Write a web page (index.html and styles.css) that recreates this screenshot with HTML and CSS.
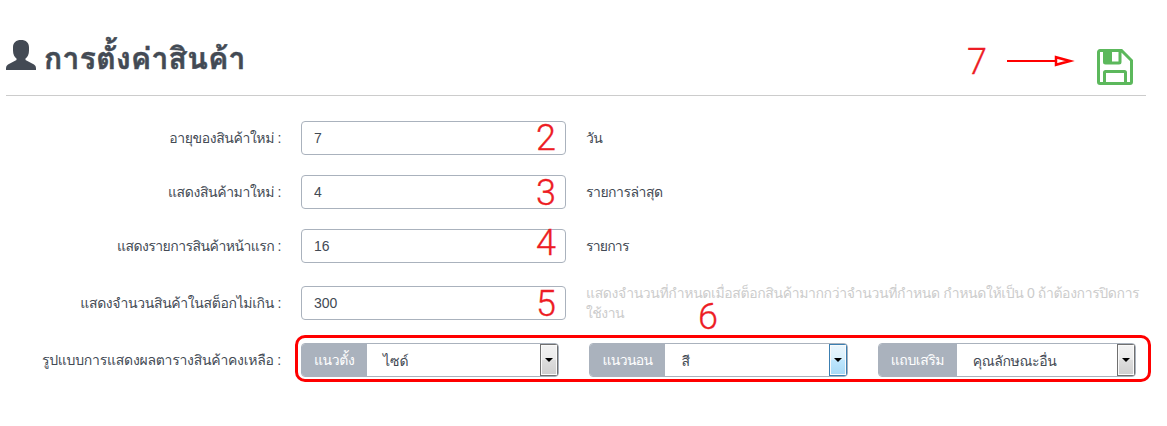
FILE: index.html
```html
<!DOCTYPE html>
<html lang="th">
<head>
<meta charset="utf-8">
<title>การตั้งค่าสินค้า</title>
<link rel="stylesheet" href="styles.css">
</head>
<body>
<main class="page">
  <header class="header">
    <svg class="user-icon" viewBox="0 0 30 30"><path d="M7 7.500C7 2.500 10 0 15 0s8 2.500 8 7.500v3c0 4-1.500 6.500-3.500 8v1.500l8.500 4.500q2 1.200 2 3.500V30H0v-2q0-2.300 2-3.500l8.500-4.500v-1.500C8.500 17 7 14.500 7 10.500z"/></svg>
    <h1 class="title"><span class="t-title">การตั้งค่าสินค้า</span></h1>
    <svg class="save-icon" viewBox="0 0 36 36"><path class="save-line" d="M3 1.500H24.500L34.500 11.500V33a1.500 1.500 0 0 1-1.500 1.500H3A1.500 1.500 0 0 1 1.500 33V3A1.500 1.500 0 0 1 3 1.500zM7.500 34V23.500a1 1 0 0 1 1-1h19a1 1 0 0 1 1 1V34M7.500 2v11a1 1 0 0 0 1 1h13.500a1 1 0 0 0 1-1V2"/><path class="save-fill" d="M7 2h8v12h-8z"/></svg>
  </header>
  <form class="form">
    <div class="row"><label class="label"><span class="t-age">อายุของสินค้าใหม่ :</span></label><input class="input" value="7"><span class="unit"><span class="t-day">วัน</span></span></div>
    <div class="row"><label class="label"><span class="t-new">แสดงสินค้ามาใหม่ :</span></label><input class="input" value="4"><span class="unit"><span class="t-latest">รายการล่าสุด</span></span></div>
    <div class="row row-wide"><label class="label"><span class="t-front">แสดงรายการสินค้าหน้าแรก :</span></label><input class="input" value="16"><span class="unit"><span class="t-item">รายการ</span></span></div>
    <div class="row row-wide"><label class="label"><span class="t-stock">แสดงจำนวนสินค้าในสต็อกไม่เกิน :</span></label><input class="input" value="300"><span class="hint"><span class="t-hint">แสดงจำนวนที่กำหนดเมื่อสต็อกสินค้ามากกว่าจำนวนที่กำหนด กำหนดให้เป็น 0 ถ้าต้องการปิดการ</span><br><span class="t-use">ใช้งาน</span></span></div>
    <div class="row"><label class="label"><span class="t-format">รูปแบบการแสดงผลตารางสินค้าคงเหลือ :</span></label>
      <div class="groups">
        <div class="group"><span class="addon addon-vertical"><span class="t-vert">แนวตั้ง</span></span><span class="select"><span class="t-size">ไซด์</span></span><span class="drop"></span></div>
        <div class="group"><span class="addon addon-horizontal"><span class="t-horiz">แนวนอน</span></span><span class="select"><span class="t-color">สี</span></span><span class="drop drop-active"></span></div>
        <div class="group"><span class="addon addon-extra"><span class="t-extra">แถบเสริม</span></span><span class="select"><span class="t-attr">คุณลักษณะอื่น</span></span><span class="drop"></span></div>
      </div>
    </div>
  </form>
  <span class="mark mark-2">2</span>
  <span class="mark mark-3">3</span>
  <span class="mark mark-4">4</span>
  <span class="mark mark-5">5</span>
  <span class="mark mark-6">6</span>
  <span class="mark mark-7">7</span>
  <svg class="arrow" viewBox="0 0 68 12"><path class="arrow-line" d="M0 6H50"/><path class="arrow-head" d="M49 2.200V9.800L63 6z"/></svg>
  <div class="frame"></div>
</main>
</body>
</html>
```
FILE: styles.css
```css
* { box-sizing: border-box; }
body { margin: 0; background: #fff; color: #434a54; font: 14px/20px "Liberation Sans", Tahoma, Loma, "Noto Sans Thai Looped", Waree, Garuda, "Noto Sans Thai", sans-serif; }
.page { position: relative; width: 1167px; height: 426px; overflow: hidden; padding: 0 21px 0 6px; }
.header { display: flex; align-items: flex-start; height: 96px; padding-top: 40px; border-bottom: 1px solid #ccc; }
.user-icon { width: 30px; height: 30px; fill: #434a54; }
.title { margin: 0 auto 0 8px; font-size: 30px; line-height: 38px; font-weight: 700; white-space: nowrap; -webkit-text-stroke: .5px #434a54; }
.save-icon { width: 36px; height: 36px; margin: 9px 13px 0 0; }
.save-line { fill: none; stroke: #5cb85c; stroke-width: 3; }
.save-fill { fill: #5cb85c; }
.form { display: flex; flex-direction: column; gap: 20px; padding-top: 25px; }
.row { display: flex; align-items: center; height: 34px; }
.row-wide { margin-bottom: 3px; }
.label { flex: none; width: 275px; margin-right: 20px; text-align: right; white-space: nowrap; }
.input { flex: none; width: 265px; height: 34px; margin: 0; padding: 6px 12px; border: 1px solid #aab2bd; border-radius: 4px; background: #fff; color: #434a54; font: inherit; }
.unit, .hint { margin-left: 20px; white-space: nowrap; }
.hint { color: #ccc; }
.groups { display: flex; gap: 30px; }
.group { display: flex; width: 258.400px; height: 34px; border: 1px solid #aab2bd; border-radius: 4px; overflow: hidden; }
.addon { flex: none; background: #aab2bd; color: #fff; line-height: 32px; padding-left: 12px; white-space: nowrap; }
.addon-vertical { width: 65px; }
.addon-horizontal { width: 75px; }
.addon-extra { width: 78px; }
.select { flex: 1; padding-left: 16px; line-height: 34px; white-space: nowrap; }
.drop { display: flex; align-items: center; justify-content: center; width: 18px; height: 32px; border: 1px solid #707070; background: linear-gradient(#f2f2f2 0, #ebebeb 48%, #ddd 50%, #cfcfcf); box-shadow: inset 0 0 0 1px #fafafa; }
.drop::before { content: ""; border: 4px solid transparent; border-top-color: #000; border-bottom: 0; }
.drop-active { border-color: #3c7fb1; background: linear-gradient(#eaf6fd 0, #d9f0fc 48%, #bee6fd 50%, #a7d9f5); }
.t-title { letter-spacing: .35px; }
.t-age, .t-new { letter-spacing: -.4px; }
.t-front { letter-spacing: -.53px; }
.t-stock { letter-spacing: -.36px; }
.t-format { letter-spacing: -.25px; }
.t-day { letter-spacing: -.5px; }
.t-latest { letter-spacing: -.5px; }
.t-item { letter-spacing: -.8px; }
.t-hint { letter-spacing: -.38px; }
.t-use { letter-spacing: -.5px; }
.t-vert { letter-spacing: -.4px; }
.t-horiz { letter-spacing: -.65px; }
.t-extra { letter-spacing: -.45px; }
.t-attr { letter-spacing: -.4px; }
.mark { position: absolute; color: #ed1c24; font: 300 36px/26px Roboto, sans-serif; -webkit-text-stroke: .3px #ed1c24; }
.mark-2 { left: 536px; top: 125px; }
.mark-3 { left: 536px; top: 180px; }
.mark-4 { left: 536px; top: 230px; }
.mark-5 { left: 536px; top: 291px; }
.mark-6 { left: 698px; top: 304px; }
.mark-7 { left: 967px; top: 49px; }
.arrow { position: absolute; left: 1007px; top: 55px; width: 68px; height: 12px; }
.arrow-line { stroke: red; stroke-width: 2; }
.arrow-head { fill: #fff; stroke: red; stroke-width: 2.500; }
.frame { position: absolute; left: 295px; top: 335px; width: 856px; height: 47px; border: 3px solid red; border-radius: 10px; }
```
